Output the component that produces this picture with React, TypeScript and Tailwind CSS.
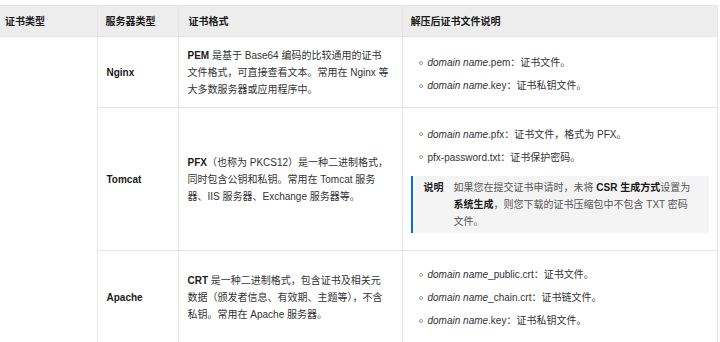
import React from "react";

const Dot = () => (
  <span className="mr-[5px] inline-block h-[4px] w-[4px] shrink-0 rounded-full border border-[#9a9a9a] align-middle" />
);

const Item = ({ children }: { children: React.ReactNode }) => (
  <li className="mb-[6px] flex items-center whitespace-nowrap last:mb-0">
    <Dot />
    <span>{children}</span>
  </li>
);

const Dn = () => <i>domain name</i>;

const App = () => {
  const th = "border border-[#e6e6e6] bg-[#ededed] text-left align-middle font-bold text-[#1a1a1a]";
  const td = "border border-[#e6e6e6] align-middle";
  const b = "font-bold text-[#1a1a1a]";

  return (
    <div
      className="h-[342px] w-[720px] overflow-hidden bg-white pt-[5px] text-[10px] leading-[17px] text-[#333]"
      style={{ fontFamily: '"Liberation Sans", "Noto Sans CJK SC", sans-serif' }}
    >
      <table className="w-[718px] table-fixed border-collapse">
        <colgroup>
          <col className="w-[97px]" />
          <col className="w-[81px]" />
          <col className="w-[224px]" />
          <col />
        </colgroup>
        <thead>
          <tr className="h-[31px]">
            <th className={`${th} border-l-0 pl-[5px]`}>证书类型</th>
            <th className={`${th} pl-[8px]`}>服务器类型</th>
            <th className={`${th} pl-[10px]`}>证书格式</th>
            <th className={`${th} pl-[8px]`}>解压后证书文件说明</th>
          </tr>
        </thead>
        <tbody>
          <tr className="h-[71px]">
            <td rowSpan={3} className={`${td} border-l-0`} />
            <td className={`${td} pl-[9px] ${b}`}>Nginx</td>
            <td className={`${td} whitespace-nowrap pl-[9px]`}>
              <b className={b}>PEM</b> 是基于 Base64 编码的比较通用的证书
              <br />
              文件格式，可直接查看文本。常用在 Nginx 等
              <br />
              大多数服务器或应用程序中。
            </td>
            <td className={`${td} px-[8px] pt-[4px]`}>
              <ul className="pl-[8px]">
                <Item>
                  <Dn />.pem：证书文件。
                </Item>
                <Item>
                  <Dn />.key：证书私钥文件。
                </Item>
              </ul>
            </td>
          </tr>
          <tr className="h-[143px]">
            <td className={`${td} pl-[9px] ${b}`}>Tomcat</td>
            <td className={`${td} whitespace-nowrap pl-[9px]`}>
              <b className={b}>PFX</b>（也称为 PKCS12）是一种二进制格式，
              <br />
              同时包含公钥和私钥。常用在 Tomcat 服务
              <br />
              器、IIS 服务器、Exchange 服务器等。
            </td>
            <td className={`${td} px-[8px]`}>
              <ul className="pl-[8px]">
                <Item>
                  <Dn />.pfx：证书文件，格式为 PFX。
                </Item>
                <Item>pfx-password.txt：证书保护密码。</Item>
              </ul>
              <div className="mt-[10px] flex border-l-2 border-[#0a6fd1] bg-[#f4f4f4] py-[3px] pl-[11px] pr-[4px]">
                <span className={`w-[30px] shrink-0 ${b}`}>说明</span>
                <span className="whitespace-nowrap text-[#555]">
                  如果您在提交证书申请时，未将 <b className={b}>CSR 生成方式</b>设置为
                  <br />
                  <b className={b}>系统生成</b>，则您下载的证书压缩包中不包含 TXT 密码
                  <br />
                  文件。
                </span>
              </div>
            </td>
          </tr>
          <tr className="h-[94px]">
            <td className={`${td} pl-[9px] ${b}`}>Apache</td>
            <td className={`${td} whitespace-nowrap pl-[9px]`}>
              <b className={b}>CRT</b> 是一种二进制格式，包含证书及相关元
              <br />
              数据（颁发者信息、有效期、主题等），不含
              <br />
              私钥。常用在 Apache 服务器。
            </td>
            <td className={`${td} px-[8px]`}>
              <ul className="pl-[8px]">
                <Item>
                  <Dn />_public.crt：证书文件。
                </Item>
                <Item>
                  <Dn />_chain.crt：证书链文件。
                </Item>
                <Item>
                  <Dn />.key：证书私钥文件。
                </Item>
              </ul>
            </td>
          </tr>
        </tbody>
      </table>
    </div>
  );
};

export default App;
